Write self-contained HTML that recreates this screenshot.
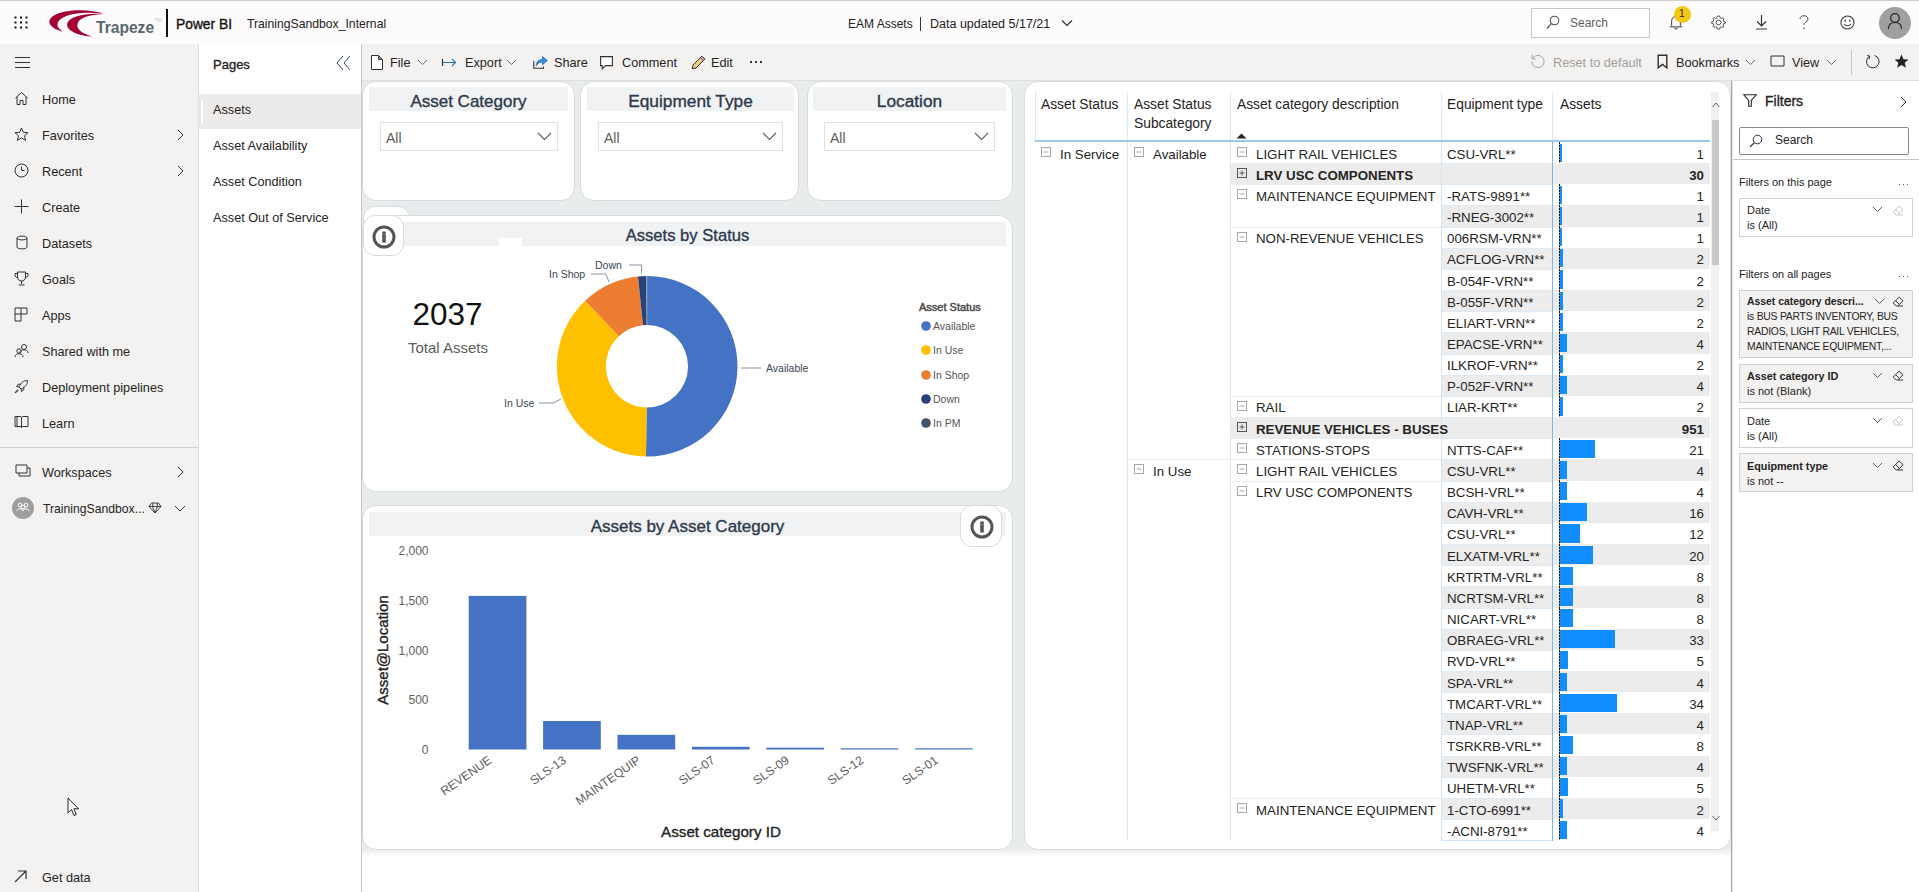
<!DOCTYPE html>
<html><head><meta charset="utf-8">
<style>
*{box-sizing:border-box;margin:0;padding:0}
html,body{width:1919px;height:892px;overflow:hidden;background:#fff}
body{position:relative;font-family:"Liberation Sans",sans-serif;color:#252423}
.a{position:absolute}
.t{position:absolute;white-space:nowrap;line-height:1}
svg{position:absolute;overflow:visible}
/* header */
#hdr{left:0;top:0;width:1919px;height:44px;background:#fdfbfc;border-top:1px solid #cfcfd3}
/* nav */
#nav{left:0;top:44px;width:199px;height:848px;background:#f3f2f1;border-right:1px solid #e1dfdd}
.ni{position:absolute;left:42px;font-size:12.7px;color:#252423;white-space:nowrap;line-height:1}
#pages{left:199px;top:44px;width:163px;height:848px;background:#fff;border-right:1px solid #c8c6c4}
#tb{left:362px;top:44px;width:1557px;height:37px;background:#f3f2f1;border-bottom:1px solid #e1dfdd}
#canvas{left:362px;top:81px;width:1369px;height:769px;background:#e8eced}
#cgrad{left:362px;top:850px;width:1369px;height:7px;background:linear-gradient(#eeeeee,#fff)}
#fp{left:1731px;top:81px;width:188px;height:811px;background:#fff;border-left:1px solid #a8a6a4;box-shadow:inset 1px 0 0 #e4e4e4}
.card{position:absolute;background:#fff;border:1px solid #d6dcdd;border-radius:14px}
.tc{font-size:13.3px;color:#252423}
.tbar{position:absolute;background:#f1f2f4}
.ttl{position:absolute;white-space:nowrap;line-height:1;font-weight:400;-webkit-text-stroke:0.35px #2d3a4b;color:#2d3a4b;text-align:center}
</style></head>
<body>
<div id="hdr" class="a">
<svg style="left:14px;top:15px" width="14" height="13" viewBox="0 0 14 13"><g fill="#111">
<rect x="0.5" y="0.5" width="2" height="2"/><rect x="6" y="0.5" width="2" height="2"/><rect x="11.5" y="0.5" width="2" height="2"/>
<rect x="0.5" y="5.5" width="2" height="2"/><rect x="6" y="5.5" width="2" height="2"/><rect x="11.5" y="5.5" width="2" height="2"/>
<rect x="0.5" y="10.5" width="2" height="2"/><rect x="6" y="10.5" width="2" height="2"/><rect x="11.5" y="10.5" width="2" height="2"/></g></svg>
<svg style="left:45px;top:5px" width="62" height="32" viewBox="0 0 62 32">
<path d="M58.8 7.8 C46 3.5 22 2 9 9.5 C1 14.5 3 21.5 18 25.8 C11 21.5 10 15.5 19 11 C29 6.5 45 6 58.8 7.8 Z" fill="#a50034"/>
<path d="M58.8 7.9 C45 6.8 29 9 23.5 15 C18 22 29 29.5 47.5 30.6 C36 27.5 29.5 22 33.5 15.5 C37.5 10 48 8.5 58.8 7.9 Z" fill="#a50034"/>
</svg>
<div class="t" style="left:96px;top:18.5px;font-size:15.6px;font-weight:700;color:#586670">Trapeze</div>
<div class="t" style="left:155px;top:18px;font-size:4.5px;color:#c0c4c8">TM</div>
<div class="a" style="left:166px;top:8px;width:2px;height:28px;background:#111"></div>
<div class="t" style="left:176px;top:17px;font-size:13.8px;-webkit-text-stroke:0.35px #111;color:#111">Power BI</div>
<div class="t" style="left:247px;top:17px;font-size:12.2px;color:#222">TrainingSandbox_Internal</div>
<div class="t" style="left:848px;top:16.5px;font-size:12px;color:#222">EAM Assets</div><div class="a" style="left:920px;top:16px;width:1px;height:14px;background:#333"></div><div class="t" style="left:930px;top:16.5px;font-size:12.5px;color:#222">Data updated 5/17/21</div>
<svg style="left:1061px;top:18px" width="12" height="8" viewBox="0 0 12 8"><path d="M1 1.5 L6 6.5 L11 1.5" fill="none" stroke="#333" stroke-width="1.2"/></svg>
<div class="a" style="left:1531px;top:7px;width:119px;height:30px;border:1px solid #c8c6c4;background:#fff"></div>
<svg style="left:1546px;top:14px" width="14" height="15" viewBox="0 0 14 15"><circle cx="8.5" cy="5.5" r="4.3" fill="none" stroke="#555" stroke-width="1.1"/><path d="M5.3 8.7 L1 13.5" stroke="#555" stroke-width="1.2"/></svg>
<div class="t" style="left:1570px;top:16px;font-size:12px;color:#605e5c">Search</div>
<svg style="left:1669px;top:14px" width="14" height="15" viewBox="0 0 16 17"><path d="M3 12 L3 7 C3 3.5 5 1.5 8 1.5 C11 1.5 13 3.5 13 7 L13 12 L14.5 13.5 L1.5 13.5 Z" fill="none" stroke="#333" stroke-width="1.1"/><path d="M6 15 C6.5 16.3 9.5 16.3 10 15" fill="none" stroke="#333" stroke-width="1.1"/></svg>
<div class="a" style="left:1674px;top:5px;width:17px;height:17px;border-radius:50%;background:#f2c811"></div>
<div class="t" style="left:1679px;top:8px;font-size:10px;color:#222">1</div>
<svg style="left:1711px;top:14px" width="15" height="15" viewBox="0 0 16 16"><path d="M8 1 L9.3 1.2 L9.8 3 L11.3 3.7 L12.9 2.8 L13.9 3.8 L13 5.4 L13.6 6.9 L15.4 7.4 L15.4 8.7 L13.6 9.2 L13 10.7 L13.9 12.3 L12.9 13.3 L11.3 12.4 L9.8 13.1 L9.3 14.9 L6.7 14.9 L6.2 13.1 L4.7 12.4 L3.1 13.3 L2.1 12.3 L3 10.7 L2.4 9.2 L0.6 8.7 L0.6 7.4 L2.4 6.9 L3 5.4 L2.1 3.8 L3.1 2.8 L4.7 3.7 L6.2 3 L6.7 1.2 Z" fill="none" stroke="#444" stroke-width="1"/><circle cx="8" cy="8" r="2.6" fill="none" stroke="#444" stroke-width="1"/></svg>
<svg style="left:1755px;top:13px" width="13" height="16" viewBox="0 0 13 16"><path d="M6.5 1 L6.5 12 M2 7.5 L6.5 12 L11 7.5 M1 15 L12 15" fill="none" stroke="#333" stroke-width="1.2"/></svg>
<svg style="left:1799px;top:14px" width="10" height="15" viewBox="0 0 11 17"><path d="M1 4.5 C1 2.2 3 0.8 5.5 0.8 C8 0.8 10 2.4 10 4.6 C10 6.8 8.2 7.6 6.8 8.6 C5.8 9.3 5.5 10 5.5 11.5" fill="none" stroke="#444" stroke-width="1.1"/><circle cx="5.5" cy="15" r="0.9" fill="#444"/></svg>
<svg style="left:1840px;top:14px" width="15" height="15" viewBox="0 0 16 16"><circle cx="8" cy="8" r="7" fill="none" stroke="#333" stroke-width="1.1"/><circle cx="5.5" cy="6" r="0.9" fill="#333"/><circle cx="10.5" cy="6" r="0.9" fill="#333"/><path d="M4.5 9.5 C6 12 10 12 11.5 9.5" fill="none" stroke="#333" stroke-width="1.1"/></svg>
<div class="a" style="left:1879px;top:6px;width:32px;height:32px;border-radius:50%;background:#a19f9d"></div>
<svg style="left:1887px;top:11px" width="16" height="18" viewBox="0 0 16 18"><circle cx="8" cy="6" r="4.3" fill="none" stroke="#222" stroke-width="1.2"/><path d="M1.5 17 C1.5 12 4.5 10.5 8 10.5 C11.5 10.5 14.5 12 14.5 17" fill="none" stroke="#222" stroke-width="1.2"/></svg>
</div>
<div id="nav" class="a">
<svg style="left:15px;top:13px" width="15" height="11" viewBox="0 0 15 11"><path d="M0 0.5 H15 M0 5.5 H15 M0 10.5 H15" stroke="#323130" stroke-width="1.1"/></svg>
<svg style="left:14px;top:47px" width="15" height="15" viewBox="0 0 15 15"><path d="M1.5 7 L7.5 1.5 L13.5 7 M3 5.8 V13.5 H6 V9.5 H9 V13.5 H12 V5.8" fill="none" stroke="#323130" stroke-width="1"/></svg>
<div class="ni" style="top:50px">Home</div>
<svg style="left:14px;top:83px" width="15" height="15" viewBox="0 0 15 15"><path d="M7.5 1 L9.4 5.4 L14 5.7 L10.5 8.7 L11.6 13.4 L7.5 10.9 L3.4 13.4 L4.5 8.7 L1 5.7 L5.6 5.4 Z" fill="none" stroke="#323130" stroke-width="1"/></svg>
<div class="ni" style="top:86px">Favorites</div>
<svg style="left:177px;top:85px" width="7" height="12" viewBox="0 0 7 12"><path d="M1 1 L6 6 L1 11" fill="none" stroke="#323130" stroke-width="1"/></svg>
<svg style="left:14px;top:119px" width="15" height="15" viewBox="0 0 15 15"><circle cx="7.5" cy="7.5" r="6.5" fill="none" stroke="#323130" stroke-width="1"/><path d="M7.5 3.5 V7.5 H10.5" fill="none" stroke="#323130" stroke-width="1"/></svg>
<div class="ni" style="top:122px">Recent</div>
<svg style="left:177px;top:121px" width="7" height="12" viewBox="0 0 7 12"><path d="M1 1 L6 6 L1 11" fill="none" stroke="#323130" stroke-width="1"/></svg>
<svg style="left:14px;top:155px" width="15" height="15" viewBox="0 0 15 15"><path d="M7.5 0.5 V14.5 M0.5 7.5 H14.5" fill="none" stroke="#323130" stroke-width="1"/></svg>
<div class="ni" style="top:158px">Create</div>
<svg style="left:16px;top:191px" width="12" height="15" viewBox="0 0 12 15"><path d="M1 3 C1 0.5 11 0.5 11 3 V12 C11 14.5 1 14.5 1 12 Z M1 3 C1 5.5 11 5.5 11 3" fill="none" stroke="#323130" stroke-width="1"/></svg>
<div class="ni" style="top:194px">Datasets</div>
<svg style="left:14px;top:227px" width="15" height="15" viewBox="0 0 15 15"><path d="M3.5 1 H11.5 V6 C11.5 8.5 9.5 10 7.5 10 C5.5 10 3.5 8.5 3.5 6 Z M3.5 2.5 H1 V4 C1 5.5 2 6.5 3.7 6.8 M11.5 2.5 H14 V4 C14 5.5 13 6.5 11.3 6.8 M7.5 10 V13 M4.5 14 H10.5" fill="none" stroke="#323130" stroke-width="1"/></svg>
<div class="ni" style="top:230px">Goals</div>
<svg style="left:14px;top:263px" width="14" height="15" viewBox="0 0 14 15"><path d="M1 1 H13 V7 H7 V14 H1 Z M7 1 V7 M1 7 H7" fill="none" stroke="#323130" stroke-width="1"/></svg>
<div class="ni" style="top:266px">Apps</div>
<svg style="left:14px;top:299px" width="15" height="15" viewBox="0 0 15 15"><circle cx="10" cy="4" r="2.5" fill="none" stroke="#323130" stroke-width="1"/><path d="M6 10 C6 7.5 8 6.8 10 6.8 C12 6.8 14 7.5 14 10" fill="none" stroke="#323130" stroke-width="1"/><circle cx="5" cy="8" r="2.2" fill="none" stroke="#323130" stroke-width="1"/><path d="M1 14 C1 11.5 3 10.8 5 10.8 C7 10.8 9 11.5 9 14" fill="none" stroke="#323130" stroke-width="1"/></svg>
<div class="ni" style="top:302px">Shared with me</div>
<svg style="left:14px;top:335px" width="15" height="15" viewBox="0 0 15 15"><path d="M13.5 1.5 C9.5 1.5 6.5 4 5 8 L7 10 C11 8.5 13.5 5.5 13.5 1.5 Z M5 8 L2.5 7.5 L4.5 5 L7 5.5 M7 10 L7.5 12.5 L10 10.5 L9.5 8 M3.5 10.5 L1 14 L4.5 11.5" fill="none" stroke="#323130" stroke-width="1"/></svg>
<div class="ni" style="top:338px">Deployment pipelines</div>
<svg style="left:14px;top:371px" width="15" height="14" viewBox="0 0 15 14"><path d="M1 1.5 H6 C7 1.5 7.5 2 7.5 3 V13 C7.5 12 7 11.5 6 11.5 H1 Z M14 1.5 H9 C8 1.5 7.5 2 7.5 3 M14 1.5 V11.5 H9 C8 11.5 7.5 12 7.5 13 M3 1.5 V11.5" fill="none" stroke="#323130" stroke-width="1"/></svg>
<div class="ni" style="top:374px">Learn</div>
<div class="a" style="left:0;top:403px;width:198px;height:1px;background:#d2d0ce"></div>
<svg style="left:15px;top:420px" width="16" height="14" viewBox="0 0 16 14"><path d="M1 1 H12 V9 H1 Z M4 9 V12 H15 V4 H12" fill="none" stroke="#323130" stroke-width="1"/></svg>
<div class="ni" style="top:423px">Workspaces</div>
<svg style="left:177px;top:422px" width="7" height="12" viewBox="0 0 7 12"><path d="M1 1 L6 6 L1 11" fill="none" stroke="#323130" stroke-width="1"/></svg>
<div class="a" style="left:12px;top:453px;width:22px;height:22px;border-radius:50%;background:#a19f9d"></div>
<svg style="left:16px;top:458px" width="14" height="11" viewBox="0 0 14 11"><circle cx="4" cy="3" r="1.8" fill="none" stroke="#fff" stroke-width="1"/><circle cx="10" cy="3" r="1.8" fill="none" stroke="#fff" stroke-width="1"/><circle cx="7" cy="5" r="1.8" fill="none" stroke="#fff" stroke-width="1"/><path d="M1 9 C1 6 7 6 7 9 M7 9 C7 6 13 6 13 9" fill="none" stroke="#fff" stroke-width="1"/></svg>
<div class="ni" style="top:459px;left:43px;font-size:12.2px">TrainingSandbox...</div>
<svg style="left:148px;top:458px" width="14" height="12" viewBox="0 0 14 12"><path d="M3.5 1 H10.5 L13 4.5 L7 11 L1 4.5 Z M1 4.5 H13 M5 1 L4.5 4.5 L7 11 L9.5 4.5 L9 1" fill="none" stroke="#323130" stroke-width="0.9"/></svg>
<svg style="left:174px;top:461px" width="12" height="7" viewBox="0 0 12 7"><path d="M1 1 L6 6 L11 1" fill="none" stroke="#323130" stroke-width="1"/></svg>
<svg style="left:14px;top:826px" width="13" height="13" viewBox="0 0 13 13"><path d="M1 12 L12 1 M4 1 H12 V9" fill="none" stroke="#323130" stroke-width="1.2"/></svg>
<div class="ni" style="top:828px">Get data</div>
<svg style="left:67px;top:753px" width="13" height="20" viewBox="0 0 13 20"><path d="M1 1 L1 16 L4.5 12.5 L7 18.5 L9.3 17.5 L6.8 11.8 L11.5 11.8 Z" fill="#fff" stroke="#222" stroke-width="1"/></svg>
</div>
<div id="pages" class="a">
<div class="t" style="left:14px;top:14px;font-size:13px;-webkit-text-stroke:0.35px #252423;color:#252423">Pages</div>
<svg style="left:137px;top:11px" width="15" height="16" viewBox="0 0 15 16"><path d="M7 1 L1 8 L7 15 M14 1 L8 8 L14 15" fill="none" stroke="#3b4a63" stroke-width="1"/></svg>
<div class="a" style="left:0;top:50px;width:162px;height:35px;background:#edebe9"></div>
<div class="a" style="left:2px;top:57px;width:2px;height:22px;background:#fff"></div>
<div class="ni" style="left:14px;top:60px">Assets</div>
<div class="ni" style="left:14px;top:96px">Asset Availability</div>
<div class="ni" style="left:14px;top:132px">Asset Condition</div>
<div class="ni" style="left:14px;top:168px">Asset Out of Service</div>
</div>
<div id="tb" class="a">
<svg style="left:9px;top:11px" width="12" height="15" viewBox="0 0 12 15"><path d="M0.5 0.5 H7.5 L11.5 4.5 V14.5 H0.5 Z" fill="#fff" stroke="#323130" stroke-width="1"/><path d="M7.5 0.5 V4.5 H11.5 Z" fill="#8a8886" stroke="#323130" stroke-width="0.8"/></svg>
<div class="ni" style="left:28px;top:13px">File</div>
<svg style="left:55px;top:15px" width="11" height="7" viewBox="0 0 11 7"><path d="M1 1 L5.5 5.5 L10 1" fill="none" stroke="#605e5c" stroke-width="0.9"/></svg>
<svg style="left:79px;top:14px" width="16" height="9" viewBox="0 0 16 9"><path d="M1.5 1 V8" stroke="#323130" stroke-width="1.2"/><path d="M2 4.5 H14.5 M11 1 L14.5 4.5 L11 8" fill="none" stroke="#1f77b4" stroke-width="1.1"/></svg>
<div class="ni" style="left:103px;top:13px">Export</div>
<svg style="left:144px;top:15px" width="11" height="7" viewBox="0 0 11 7"><path d="M1 1 L5.5 5.5 L10 1" fill="none" stroke="#605e5c" stroke-width="0.9"/></svg>
<svg style="left:171px;top:11px" width="15" height="14" viewBox="0 0 15 14"><path d="M0.8 6 V13.2 H10.5 V11.5" fill="none" stroke="#323130" stroke-width="1.1"/><path d="M3.2 10.8 C3.5 6.5 6 4.5 9.5 4.3 V1.5 L14.3 5.6 L9.5 9.7 V7 C6.8 7 4.8 8.3 3.2 10.8 Z" fill="#3a8ee6" stroke="#1f6fb5" stroke-width="0.8"/></svg>
<div class="ni" style="left:192px;top:13px">Share</div>
<svg style="left:238px;top:12px" width="14" height="14" viewBox="0 0 14 14"><path d="M0.6 0.6 H12.4 V9.6 H5.5 L2.2 13 V9.6 H0.6 Z" fill="#fff" stroke="#323130" stroke-width="1.1"/></svg>
<div class="ni" style="left:260px;top:13px">Comment</div>
<svg style="left:329px;top:11px" width="15" height="15" viewBox="0 0 15 15"><path d="M10.8 1.2 L13.8 4.2 L5 13 L1.2 13.8 L2 10 Z" fill="#f0cf7a" stroke="#323130" stroke-width="1"/><path d="M10.8 1.2 L13.8 4.2 L12.3 5.7 L9.3 2.7 Z" fill="#e4a8d6" stroke="#323130" stroke-width="0.8"/></svg>
<div class="ni" style="left:349px;top:13px">Edit</div>
<div class="a" style="left:388px;top:17px;width:2px;height:2px;background:#323130;box-shadow:5px 0 0 #323130,10px 0 0 #323130"></div>
<svg style="left:1168px;top:10px" width="15" height="15" viewBox="0 0 15 15"><path d="M3 4 C4.5 2 6 1.5 8 1.5 C11.5 1.5 14 4 14 7.5 C14 11 11.5 13.5 8 13.5 C4.5 13.5 2 11 2 7.5" fill="none" stroke="#a19f9d" stroke-width="1"/><path d="M2 1 V5 H6" fill="none" stroke="#a19f9d" stroke-width="1"/></svg>
<div class="ni" style="left:1191px;top:13px;color:#a19f9d">Reset to default</div>
<svg style="left:1295px;top:10px" width="11" height="15" viewBox="0 0 11 15"><path d="M1.2 1.2 H9.8 V13.8 L5.5 10.5 L1.2 13.8 Z" fill="none" stroke="#323130" stroke-width="1.4"/></svg>
<div class="ni" style="left:1314px;top:13px">Bookmarks</div>
<svg style="left:1383px;top:15px" width="11" height="7" viewBox="0 0 11 7"><path d="M1 1 L5.5 5.5 L10 1" fill="none" stroke="#605e5c" stroke-width="0.9"/></svg>
<svg style="left:1408px;top:11px" width="15" height="12" viewBox="0 0 15 12"><path d="M1 1 H14 V11 H1 Z" fill="none" stroke="#323130" stroke-width="1"/></svg>
<div class="ni" style="left:1430px;top:13px">View</div>
<svg style="left:1464px;top:15px" width="11" height="7" viewBox="0 0 11 7"><path d="M1 1 L5.5 5.5 L10 1" fill="none" stroke="#605e5c" stroke-width="0.9"/></svg>
<div class="a" style="left:1489px;top:6px;width:1px;height:25px;background:#c8c6c4"></div>
<svg style="left:1503px;top:10px" width="15" height="15" viewBox="0 0 15 15"><path d="M4.5 2.2 A6.3 6.3 0 1 0 9.5 1.5" fill="none" stroke="#323130" stroke-width="1"/><path d="M2 1.5 L4.8 2.2 L4 5" fill="none" stroke="#323130" stroke-width="1"/></svg>
<svg style="left:1532px;top:10px" width="15" height="15" viewBox="0 0 15 15"><path d="M7.5 0.5 L9.5 5.2 L14.5 5.5 L10.7 8.8 L11.9 13.8 L7.5 11.1 L3.1 13.8 L4.3 8.8 L0.5 5.5 L5.5 5.2 Z" fill="#252423"/></svg>
</div>
<div id="canvas" class="a"></div><div id="cgrad" class="a"></div>
<div class="card" style="left:362px;top:81px;width:213px;height:120px"></div>
<div class="tbar" style="left:369px;top:87px;width:199px;height:24px"></div>
<div class="ttl" style="left:369px;top:93px;width:199px;font-size:17px">Asset Category</div>
<div class="a" style="left:380px;top:122px;width:178px;height:29px;border:1px solid #e1e1e1;background:#fff"></div>
<div class="t" style="left:386px;top:131px;font-size:14px;color:#605e5c">All</div>
<svg style="left:537px;top:132px" width="15" height="9" viewBox="0 0 15 9"><path d="M1 1 L7.5 7.5 L14 1" fill="none" stroke="#605e5c" stroke-width="1.1"/></svg>
<div class="card" style="left:580px;top:81px;width:219px;height:120px"></div>
<div class="tbar" style="left:587px;top:87px;width:207px;height:24px"></div>
<div class="ttl" style="left:587px;top:93px;width:207px;font-size:17.3px">Equipment Type</div>
<div class="a" style="left:598px;top:122px;width:185px;height:29px;border:1px solid #e1e1e1;background:#fff"></div>
<div class="t" style="left:604px;top:131px;font-size:14px;color:#605e5c">All</div>
<svg style="left:762px;top:132px" width="15" height="9" viewBox="0 0 15 9"><path d="M1 1 L7.5 7.5 L14 1" fill="none" stroke="#605e5c" stroke-width="1.1"/></svg>
<div class="card" style="left:807px;top:81px;width:206px;height:120px"></div>
<div class="tbar" style="left:813px;top:87px;width:193px;height:24px"></div>
<div class="ttl" style="left:813px;top:93px;width:193px;font-size:17.3px">Location</div>
<div class="a" style="left:824px;top:122px;width:171px;height:29px;border:1px solid #e1e1e1;background:#fff"></div>
<div class="t" style="left:830px;top:131px;font-size:14px;color:#605e5c">All</div>
<svg style="left:974px;top:132px" width="15" height="9" viewBox="0 0 15 9"><path d="M1 1 L7.5 7.5 L14 1" fill="none" stroke="#605e5c" stroke-width="1.1"/></svg>
<div class="a" style="left:363px;top:206px;width:47px;height:30px;border:1px solid #d6dcdd;border-radius:12px;background:#fff"></div>
<div class="card" style="left:362px;top:215px;width:651px;height:277px"></div>
<div class="tbar" style="left:369px;top:222px;width:637px;height:24px"></div>
<div class="a" style="left:499px;top:238px;width:23px;height:8px;background:#fff"></div>
<div class="ttl" style="left:369px;top:228px;width:637px;font-size:16.6px">Assets by Status</div>
<div class="a" style="left:363px;top:215px;width:41px;height:41px;border:1px solid #d6dcdd;border-radius:12px;background:#fff"></div>
<svg style="left:372px;top:225px" width="24" height="24" viewBox="0 0 24 24"><circle cx="12" cy="12" r="10" fill="none" stroke="#555" stroke-width="3"/><rect x="10.2" y="6.5" width="3.6" height="11" fill="#555"/><rect x="10.2" y="9.3" width="3.6" height="0.6" fill="#999"/></svg>
<svg style="left:362px;top:215px" width="650" height="277" viewBox="0 0 650 277">
<path d="M285.10 61.10 A90.2 90.2 0 1 1 284.00 241.49 L284.60 192.50 A41.2 41.2 0 1 0 285.10 110.10 Z" fill="#4472c4"/>
<path d="M284.00 241.49 A90.2 90.2 0 0 1 223.24 85.65 L256.84 121.32 A41.2 41.2 0 0 0 284.60 192.50 Z" fill="#ffc000"/>
<path d="M223.24 85.65 A90.2 90.2 0 0 1 275.98 61.56 L280.94 110.31 A41.2 41.2 0 0 0 256.84 121.32 Z" fill="#ed7d31"/>
<path d="M275.98 61.56 A90.2 90.2 0 0 1 284.16 61.10 L284.67 110.10 A41.2 41.2 0 0 0 280.94 110.31 Z" fill="#264478"/>
<path d="M284.16 61.10 A90.2 90.2 0 0 1 285.10 61.10 L285.10 110.10 A41.2 41.2 0 0 0 284.67 110.10 Z" fill="#7d8ca3"/>
<g fill="none" stroke="#7b879e" stroke-width="0.9">
<path d="M267 50 H279.5 V58.5"/>
<path d="M229 59 H244 L247 67"/>
<path d="M379 153 H399"/>
<path d="M177 188 H191 L199 184"/>
</g>
<g font-family="Liberation Sans" font-size="10.5" fill="#3b4656">
<text x="233" y="54">Down</text>
<text x="187" y="63">In Shop</text>
<text x="404" y="157">Available</text>
<text x="142" y="192">In Use</text>
</g>
<text x="557" y="96" font-family="Liberation Sans" font-size="11" stroke="#4a4a4a" stroke-width="0.45" fill="#4a4a4a">Asset Status</text>
<g font-family="Liberation Sans" font-size="10.5" fill="#555">
<circle cx="564" cy="111" r="4.8" fill="#4472c4"/><text x="571" y="115">Available</text>
<circle cx="564" cy="135" r="4.8" fill="#ffc000"/><text x="571" y="139">In Use</text>
<circle cx="564" cy="160" r="4.8" fill="#ed7d31"/><text x="571" y="164">In Shop</text>
<circle cx="564" cy="184" r="4.8" fill="#264478"/><text x="571" y="188">Down</text>
<circle cx="564" cy="208" r="4.8" fill="#44546a"/><text x="571" y="212">In PM</text>
</g>
<text x="85.5" y="110" text-anchor="middle" font-family="Liberation Sans" font-size="31.5" fill="#111">2037</text>
<text x="86" y="137.5" text-anchor="middle" font-family="Liberation Sans" font-size="15" fill="#605e5c">Total Assets</text>
</svg>
<div class="card" style="left:362px;top:505px;width:651px;height:345px"></div>
<div class="tbar" style="left:369px;top:512px;width:637px;height:24px"></div>
<div class="ttl" style="left:369px;top:518px;width:637px;font-size:17px">Assets by Asset Category</div>
<div class="a" style="left:960px;top:505px;width:42px;height:42px;border:1px solid #d6dcdd;border-radius:12px;background:#fff"></div>
<svg style="left:970px;top:515px" width="24" height="24" viewBox="0 0 24 24"><circle cx="12" cy="12" r="10" fill="none" stroke="#555" stroke-width="3"/><rect x="10.2" y="6.5" width="3.6" height="11" fill="#555"/><rect x="10.2" y="9.3" width="3.6" height="0.6" fill="#999"/></svg>
<svg style="left:362px;top:505px" width="650" height="345" viewBox="0 0 650 345">
<rect x="106.7" y="90.9" width="57.7" height="153.6" fill="#4472c4"/>
<text x="130.5" y="257.0" text-anchor="end" transform="rotate(-35 130.5 257.0)" font-family="Liberation Sans" font-size="12.2" fill="#605e5c">REVENUE</text>
<rect x="181.1" y="216.0" width="57.7" height="28.5" fill="#4472c4"/>
<text x="205.0" y="257.0" text-anchor="end" transform="rotate(-35 205.0 257.0)" font-family="Liberation Sans" font-size="12.2" fill="#605e5c">SLS-13</text>
<rect x="255.5" y="229.8" width="57.7" height="14.7" fill="#4472c4"/>
<text x="279.4" y="257.0" text-anchor="end" transform="rotate(-35 279.4 257.0)" font-family="Liberation Sans" font-size="12.2" fill="#605e5c">MAINTEQUIP</text>
<rect x="329.9" y="241.8" width="57.7" height="2.7" fill="#4472c4"/>
<text x="353.8" y="257.0" text-anchor="end" transform="rotate(-35 353.8 257.0)" font-family="Liberation Sans" font-size="12.2" fill="#605e5c">SLS-07</text>
<rect x="404.3" y="242.7" width="57.7" height="1.8" fill="#4472c4"/>
<text x="428.1" y="257.0" text-anchor="end" transform="rotate(-35 428.1 257.0)" font-family="Liberation Sans" font-size="12.2" fill="#605e5c">SLS-09</text>
<rect x="478.7" y="243.3" width="57.7" height="1.2" fill="#4472c4"/>
<text x="502.6" y="257.0" text-anchor="end" transform="rotate(-35 502.6 257.0)" font-family="Liberation Sans" font-size="12.2" fill="#605e5c">SLS-12</text>
<rect x="553.1" y="243.3" width="57.7" height="1.2" fill="#4472c4"/>
<text x="577.0" y="257.0" text-anchor="end" transform="rotate(-35 577.0 257.0)" font-family="Liberation Sans" font-size="12.2" fill="#605e5c">SLS-01</text>
<text x="66.5" y="50.4" text-anchor="end" font-family="Liberation Sans" font-size="12" fill="#605e5c">2,000</text>
<text x="66.5" y="99.8" text-anchor="end" font-family="Liberation Sans" font-size="12" fill="#605e5c">1,500</text>
<text x="66.5" y="149.6" text-anchor="end" font-family="Liberation Sans" font-size="12" fill="#605e5c">1,000</text>
<text x="66.5" y="198.5" text-anchor="end" font-family="Liberation Sans" font-size="12" fill="#605e5c">500</text>
<text x="66.5" y="248.7" text-anchor="end" font-family="Liberation Sans" font-size="12" fill="#605e5c">0</text>

<text x="0" y="0" transform="translate(26 145) rotate(-90)" text-anchor="middle" font-family="Liberation Sans" font-size="15" stroke="#252423" stroke-width="0.35" fill="#252423">Asset@Location</text>
<text x="359" y="332" text-anchor="middle" font-family="Liberation Sans" font-size="15.2" stroke="#252423" stroke-width="0.35" fill="#252423">Asset category ID</text>
</svg>

<div class="card" style="left:1024px;top:81px;width:707px;height:769px"></div>
<div class="t tc" style="left:1041px;top:98.0px;font-size:13.8px">Asset Status</div>
<div class="t tc" style="left:1134px;top:98.0px;font-size:13.8px">Asset Status</div>
<div class="t tc" style="left:1134px;top:117.0px;font-size:13.8px">Subcategory</div>
<div class="t tc" style="left:1237px;top:98.0px;font-size:13.8px">Asset category description</div>
<div class="t tc" style="left:1447px;top:98.0px;font-size:13.8px">Equipment type</div>
<div class="t tc" style="left:1560px;top:98.0px;font-size:13.8px">Assets</div>
<svg style="left:1236px;top:133px" width="11" height="6" viewBox="0 0 11 6"><path d="M0.5 5.5 L5.5 0.5 L10.5 5.5 Z" fill="#252423"/></svg>
<div class="a" style="left:1035px;top:92px;width:1px;height:49px;background:#d3e6f8"></div>
<div class="a" style="left:1127px;top:92px;width:1px;height:49px;background:#dce9f6"></div>
<div class="a" style="left:1230px;top:92px;width:1px;height:49px;background:#dce9f6"></div>
<div class="a" style="left:1441px;top:92px;width:1px;height:49px;background:#dce9f6"></div>
<div class="a" style="left:1552px;top:92px;width:1px;height:49px;background:#dce9f6"></div>
<div class="a" style="left:1231px;top:163.16px;width:479px;height:21.16px;background:#ececec"></div>
<div class="a" style="left:1442px;top:205.48px;width:268px;height:21.16px;background:#ececec"></div>
<div class="a" style="left:1442px;top:247.80px;width:268px;height:21.16px;background:#ececec"></div>
<div class="a" style="left:1442px;top:290.12px;width:268px;height:21.16px;background:#ececec"></div>
<div class="a" style="left:1442px;top:332.44px;width:268px;height:21.16px;background:#ececec"></div>
<div class="a" style="left:1442px;top:374.76px;width:268px;height:21.16px;background:#ececec"></div>
<div class="a" style="left:1231px;top:417.08px;width:479px;height:21.16px;background:#ececec"></div>
<div class="a" style="left:1442px;top:459.40px;width:268px;height:21.16px;background:#ececec"></div>
<div class="a" style="left:1442px;top:501.72px;width:268px;height:21.16px;background:#ececec"></div>
<div class="a" style="left:1442px;top:544.04px;width:268px;height:21.16px;background:#ececec"></div>
<div class="a" style="left:1442px;top:586.36px;width:268px;height:21.16px;background:#ececec"></div>
<div class="a" style="left:1442px;top:628.68px;width:268px;height:21.16px;background:#ececec"></div>
<div class="a" style="left:1442px;top:671.00px;width:268px;height:21.16px;background:#ececec"></div>
<div class="a" style="left:1442px;top:713.32px;width:268px;height:21.16px;background:#ececec"></div>
<div class="a" style="left:1442px;top:755.64px;width:268px;height:21.16px;background:#ececec"></div>
<div class="a" style="left:1442px;top:797.96px;width:268px;height:21.16px;background:#ececec"></div>
<div class="a" style="left:1231px;top:163.16px;width:210px;height:1px;background:#e9eef4"></div>
<div class="a" style="left:1231px;top:184.32px;width:210px;height:1px;background:#e9eef4"></div>
<div class="a" style="left:1231px;top:226.64px;width:210px;height:1px;background:#e9eef4"></div>
<div class="a" style="left:1231px;top:395.92px;width:210px;height:1px;background:#e9eef4"></div>
<div class="a" style="left:1231px;top:417.08px;width:210px;height:1px;background:#e9eef4"></div>
<div class="a" style="left:1231px;top:438.24px;width:210px;height:1px;background:#e9eef4"></div>
<div class="a" style="left:1231px;top:459.40px;width:210px;height:1px;background:#e9eef4"></div>
<div class="a" style="left:1231px;top:480.56px;width:210px;height:1px;background:#e9eef4"></div>
<div class="a" style="left:1231px;top:797.96px;width:210px;height:1px;background:#e9eef4"></div>
<div class="a" style="left:1442px;top:163.16px;width:110px;height:1px;background:#dde9f5"></div>
<div class="a" style="left:1442px;top:184.32px;width:110px;height:1px;background:#dde9f5"></div>
<div class="a" style="left:1442px;top:205.48px;width:110px;height:1px;background:#dde9f5"></div>
<div class="a" style="left:1442px;top:226.64px;width:110px;height:1px;background:#dde9f5"></div>
<div class="a" style="left:1442px;top:247.80px;width:110px;height:1px;background:#dde9f5"></div>
<div class="a" style="left:1442px;top:268.96px;width:110px;height:1px;background:#dde9f5"></div>
<div class="a" style="left:1442px;top:290.12px;width:110px;height:1px;background:#dde9f5"></div>
<div class="a" style="left:1442px;top:311.28px;width:110px;height:1px;background:#dde9f5"></div>
<div class="a" style="left:1442px;top:332.44px;width:110px;height:1px;background:#dde9f5"></div>
<div class="a" style="left:1442px;top:353.60px;width:110px;height:1px;background:#dde9f5"></div>
<div class="a" style="left:1442px;top:374.76px;width:110px;height:1px;background:#dde9f5"></div>
<div class="a" style="left:1442px;top:395.92px;width:110px;height:1px;background:#dde9f5"></div>
<div class="a" style="left:1442px;top:417.08px;width:110px;height:1px;background:#dde9f5"></div>
<div class="a" style="left:1442px;top:438.24px;width:110px;height:1px;background:#dde9f5"></div>
<div class="a" style="left:1442px;top:459.40px;width:110px;height:1px;background:#dde9f5"></div>
<div class="a" style="left:1442px;top:480.56px;width:110px;height:1px;background:#dde9f5"></div>
<div class="a" style="left:1442px;top:501.72px;width:110px;height:1px;background:#dde9f5"></div>
<div class="a" style="left:1442px;top:522.88px;width:110px;height:1px;background:#dde9f5"></div>
<div class="a" style="left:1442px;top:544.04px;width:110px;height:1px;background:#dde9f5"></div>
<div class="a" style="left:1442px;top:565.20px;width:110px;height:1px;background:#dde9f5"></div>
<div class="a" style="left:1442px;top:586.36px;width:110px;height:1px;background:#dde9f5"></div>
<div class="a" style="left:1442px;top:607.52px;width:110px;height:1px;background:#dde9f5"></div>
<div class="a" style="left:1442px;top:628.68px;width:110px;height:1px;background:#dde9f5"></div>
<div class="a" style="left:1442px;top:649.84px;width:110px;height:1px;background:#dde9f5"></div>
<div class="a" style="left:1442px;top:671.00px;width:110px;height:1px;background:#dde9f5"></div>
<div class="a" style="left:1442px;top:692.16px;width:110px;height:1px;background:#dde9f5"></div>
<div class="a" style="left:1442px;top:713.32px;width:110px;height:1px;background:#dde9f5"></div>
<div class="a" style="left:1442px;top:734.48px;width:110px;height:1px;background:#dde9f5"></div>
<div class="a" style="left:1442px;top:755.64px;width:110px;height:1px;background:#dde9f5"></div>
<div class="a" style="left:1442px;top:776.80px;width:110px;height:1px;background:#dde9f5"></div>
<div class="a" style="left:1442px;top:797.96px;width:110px;height:1px;background:#dde9f5"></div>
<div class="a" style="left:1442px;top:819.12px;width:110px;height:1px;background:#dde9f5"></div>
<div class="a" style="left:1128px;top:459.40px;width:102px;height:1px;background:#e9eef4"></div>
<div class="a" style="left:1127px;top:142px;width:1px;height:699px;background:#e6e6e6"></div>
<div class="a" style="left:1230px;top:142px;width:1px;height:699px;background:#e6e6e6"></div>
<div class="a" style="left:1441px;top:142px;width:1px;height:699px;background:#d3e4f5"></div>
<div class="a" style="left:1552px;top:142px;width:1px;height:699px;background:#7fb5ea"></div>
<div class="a" style="left:1442px;top:840px;width:110px;height:1px;background:#d3e4f5"></div>
<div class="a" style="left:1035px;top:140px;width:675px;height:2px;background:#9ccaf4"></div>
<svg style="left:1041px;top:147px" width="10" height="10" viewBox="0 0 10 10"><rect x="0.5" y="0.5" width="9" height="9" fill="none" stroke="#a8a8a8" stroke-width="1"/><path d="M2.5 5 H7.5" stroke="#a8a8a8" stroke-width="1"/></svg>
<div class="t tc" style="left:1060px;top:147.5px">In Service</div>
<svg style="left:1134px;top:147px" width="10" height="10" viewBox="0 0 10 10"><rect x="0.5" y="0.5" width="9" height="9" fill="none" stroke="#a8a8a8" stroke-width="1"/><path d="M2.5 5 H7.5" stroke="#a8a8a8" stroke-width="1"/></svg>
<div class="t tc" style="left:1153px;top:147.5px">Available</div>
<svg style="left:1237px;top:147px" width="10" height="10" viewBox="0 0 10 10"><rect x="0.5" y="0.5" width="9" height="9" fill="none" stroke="#a8a8a8" stroke-width="1"/><path d="M2.5 5 H7.5" stroke="#a8a8a8" stroke-width="1"/></svg>
<div class="t tc" style="left:1256px;top:147.5px">LIGHT RAIL VEHICLES</div>
<div class="t tc" style="left:1447px;top:147.5px">CSU-VRL**</div>
<div class="a" style="left:1559px;top:142.00px;width:1px;height:21.16px;background:repeating-linear-gradient(#111 0 2px,#8ab 2px 3px)"></div>
<div class="a" style="left:1560px;top:143.50px;width:1.7px;height:18.16px;background:#118dff"></div>
<div class="t tc" style="left:1604px;width:100px;text-align:right;top:147.5px;">1</div>
<svg style="left:1237px;top:168px" width="10" height="10" viewBox="0 0 10 10"><rect x="0.5" y="0.5" width="9" height="9" fill="none" stroke="#555" stroke-width="1"/><path d="M2.5 5 H7.5 M5 2.5 V7.5" stroke="#555" stroke-width="1"/></svg>
<div class="t tc" style="left:1256px;top:168.7px;font-weight:700">LRV USC COMPONENTS</div>
<div class="t tc" style="left:1604px;width:100px;text-align:right;top:168.7px;font-weight:700">30</div>
<svg style="left:1237px;top:189px" width="10" height="10" viewBox="0 0 10 10"><rect x="0.5" y="0.5" width="9" height="9" fill="none" stroke="#a8a8a8" stroke-width="1"/><path d="M2.5 5 H7.5" stroke="#a8a8a8" stroke-width="1"/></svg>
<div class="t tc" style="left:1256px;top:189.8px">MAINTENANCE EQUIPMENT</div>
<div class="t tc" style="left:1447px;top:189.8px">-RATS-9891**</div>
<div class="a" style="left:1559px;top:184.32px;width:1px;height:21.16px;background:repeating-linear-gradient(#111 0 2px,#8ab 2px 3px)"></div>
<div class="a" style="left:1560px;top:185.82px;width:1.7px;height:18.16px;background:#118dff"></div>
<div class="t tc" style="left:1604px;width:100px;text-align:right;top:189.8px;">1</div>
<div class="t tc" style="left:1447px;top:211.0px">-RNEG-3002**</div>
<div class="a" style="left:1559px;top:205.48px;width:1px;height:21.16px;background:repeating-linear-gradient(#111 0 2px,#8ab 2px 3px)"></div>
<div class="a" style="left:1560px;top:206.98px;width:1.7px;height:18.16px;background:#118dff"></div>
<div class="t tc" style="left:1604px;width:100px;text-align:right;top:211.0px;">1</div>
<svg style="left:1237px;top:232px" width="10" height="10" viewBox="0 0 10 10"><rect x="0.5" y="0.5" width="9" height="9" fill="none" stroke="#a8a8a8" stroke-width="1"/><path d="M2.5 5 H7.5" stroke="#a8a8a8" stroke-width="1"/></svg>
<div class="t tc" style="left:1256px;top:232.1px">NON-REVENUE VEHICLES</div>
<div class="t tc" style="left:1447px;top:232.1px">006RSM-VRN**</div>
<div class="a" style="left:1559px;top:226.64px;width:1px;height:21.16px;background:repeating-linear-gradient(#111 0 2px,#8ab 2px 3px)"></div>
<div class="a" style="left:1560px;top:228.14px;width:1.7px;height:18.16px;background:#118dff"></div>
<div class="t tc" style="left:1604px;width:100px;text-align:right;top:232.1px;">1</div>
<div class="t tc" style="left:1447px;top:253.3px">ACFLOG-VRN**</div>
<div class="a" style="left:1559px;top:247.80px;width:1px;height:21.16px;background:repeating-linear-gradient(#111 0 2px,#8ab 2px 3px)"></div>
<div class="a" style="left:1560px;top:249.30px;width:3.3px;height:18.16px;background:#118dff"></div>
<div class="t tc" style="left:1604px;width:100px;text-align:right;top:253.3px;">2</div>
<div class="t tc" style="left:1447px;top:274.5px">B-054F-VRN**</div>
<div class="a" style="left:1559px;top:268.96px;width:1px;height:21.16px;background:repeating-linear-gradient(#111 0 2px,#8ab 2px 3px)"></div>
<div class="a" style="left:1560px;top:270.46px;width:3.3px;height:18.16px;background:#118dff"></div>
<div class="t tc" style="left:1604px;width:100px;text-align:right;top:274.5px;">2</div>
<div class="t tc" style="left:1447px;top:295.6px">B-055F-VRN**</div>
<div class="a" style="left:1559px;top:290.12px;width:1px;height:21.16px;background:repeating-linear-gradient(#111 0 2px,#8ab 2px 3px)"></div>
<div class="a" style="left:1560px;top:291.62px;width:3.3px;height:18.16px;background:#118dff"></div>
<div class="t tc" style="left:1604px;width:100px;text-align:right;top:295.6px;">2</div>
<div class="t tc" style="left:1447px;top:316.8px">ELIART-VRN**</div>
<div class="a" style="left:1559px;top:311.28px;width:1px;height:21.16px;background:repeating-linear-gradient(#111 0 2px,#8ab 2px 3px)"></div>
<div class="a" style="left:1560px;top:312.78px;width:3.3px;height:18.16px;background:#118dff"></div>
<div class="t tc" style="left:1604px;width:100px;text-align:right;top:316.8px;">2</div>
<div class="t tc" style="left:1447px;top:337.9px">EPACSE-VRN**</div>
<div class="a" style="left:1559px;top:332.44px;width:1px;height:21.16px;background:repeating-linear-gradient(#111 0 2px,#8ab 2px 3px)"></div>
<div class="a" style="left:1560px;top:333.94px;width:6.7px;height:18.16px;background:#118dff"></div>
<div class="t tc" style="left:1604px;width:100px;text-align:right;top:337.9px;">4</div>
<div class="t tc" style="left:1447px;top:359.1px">ILKROF-VRN**</div>
<div class="a" style="left:1559px;top:353.60px;width:1px;height:21.16px;background:repeating-linear-gradient(#111 0 2px,#8ab 2px 3px)"></div>
<div class="a" style="left:1560px;top:355.10px;width:3.3px;height:18.16px;background:#118dff"></div>
<div class="t tc" style="left:1604px;width:100px;text-align:right;top:359.1px;">2</div>
<div class="t tc" style="left:1447px;top:380.3px">P-052F-VRN**</div>
<div class="a" style="left:1559px;top:374.76px;width:1px;height:21.16px;background:repeating-linear-gradient(#111 0 2px,#8ab 2px 3px)"></div>
<div class="a" style="left:1560px;top:376.26px;width:6.7px;height:18.16px;background:#118dff"></div>
<div class="t tc" style="left:1604px;width:100px;text-align:right;top:380.3px;">4</div>
<svg style="left:1237px;top:401px" width="10" height="10" viewBox="0 0 10 10"><rect x="0.5" y="0.5" width="9" height="9" fill="none" stroke="#a8a8a8" stroke-width="1"/><path d="M2.5 5 H7.5" stroke="#a8a8a8" stroke-width="1"/></svg>
<div class="t tc" style="left:1256px;top:401.4px">RAIL</div>
<div class="t tc" style="left:1447px;top:401.4px">LIAR-KRT**</div>
<div class="a" style="left:1559px;top:395.92px;width:1px;height:21.16px;background:repeating-linear-gradient(#111 0 2px,#8ab 2px 3px)"></div>
<div class="a" style="left:1560px;top:397.42px;width:3.3px;height:18.16px;background:#118dff"></div>
<div class="t tc" style="left:1604px;width:100px;text-align:right;top:401.4px;">2</div>
<svg style="left:1237px;top:422px" width="10" height="10" viewBox="0 0 10 10"><rect x="0.5" y="0.5" width="9" height="9" fill="none" stroke="#555" stroke-width="1"/><path d="M2.5 5 H7.5 M5 2.5 V7.5" stroke="#555" stroke-width="1"/></svg>
<div class="t tc" style="left:1256px;top:422.6px;font-weight:700">REVENUE VEHICLES - BUSES</div>
<div class="t tc" style="left:1604px;width:100px;text-align:right;top:422.6px;font-weight:700">951</div>
<svg style="left:1237px;top:443px" width="10" height="10" viewBox="0 0 10 10"><rect x="0.5" y="0.5" width="9" height="9" fill="none" stroke="#a8a8a8" stroke-width="1"/><path d="M2.5 5 H7.5" stroke="#a8a8a8" stroke-width="1"/></svg>
<div class="t tc" style="left:1256px;top:443.7px">STATIONS-STOPS</div>
<div class="t tc" style="left:1447px;top:443.7px">NTTS-CAF**</div>
<div class="a" style="left:1559px;top:438.24px;width:1px;height:21.16px;background:repeating-linear-gradient(#111 0 2px,#8ab 2px 3px)"></div>
<div class="a" style="left:1560px;top:439.74px;width:35.1px;height:18.16px;background:#118dff"></div>
<div class="t tc" style="left:1604px;width:100px;text-align:right;top:443.7px;">21</div>
<svg style="left:1134px;top:464px" width="10" height="10" viewBox="0 0 10 10"><rect x="0.5" y="0.5" width="9" height="9" fill="none" stroke="#a8a8a8" stroke-width="1"/><path d="M2.5 5 H7.5" stroke="#a8a8a8" stroke-width="1"/></svg>
<div class="t tc" style="left:1153px;top:464.9px">In Use</div>
<svg style="left:1237px;top:464px" width="10" height="10" viewBox="0 0 10 10"><rect x="0.5" y="0.5" width="9" height="9" fill="none" stroke="#a8a8a8" stroke-width="1"/><path d="M2.5 5 H7.5" stroke="#a8a8a8" stroke-width="1"/></svg>
<div class="t tc" style="left:1256px;top:464.9px">LIGHT RAIL VEHICLES</div>
<div class="t tc" style="left:1447px;top:464.9px">CSU-VRL**</div>
<div class="a" style="left:1559px;top:459.40px;width:1px;height:21.16px;background:repeating-linear-gradient(#111 0 2px,#8ab 2px 3px)"></div>
<div class="a" style="left:1560px;top:460.90px;width:6.7px;height:18.16px;background:#118dff"></div>
<div class="t tc" style="left:1604px;width:100px;text-align:right;top:464.9px;">4</div>
<svg style="left:1237px;top:486px" width="10" height="10" viewBox="0 0 10 10"><rect x="0.5" y="0.5" width="9" height="9" fill="none" stroke="#a8a8a8" stroke-width="1"/><path d="M2.5 5 H7.5" stroke="#a8a8a8" stroke-width="1"/></svg>
<div class="t tc" style="left:1256px;top:486.1px">LRV USC COMPONENTS</div>
<div class="t tc" style="left:1447px;top:486.1px">BCSH-VRL**</div>
<div class="a" style="left:1559px;top:480.56px;width:1px;height:21.16px;background:repeating-linear-gradient(#111 0 2px,#8ab 2px 3px)"></div>
<div class="a" style="left:1560px;top:482.06px;width:6.7px;height:18.16px;background:#118dff"></div>
<div class="t tc" style="left:1604px;width:100px;text-align:right;top:486.1px;">4</div>
<div class="t tc" style="left:1447px;top:507.2px">CAVH-VRL**</div>
<div class="a" style="left:1559px;top:501.72px;width:1px;height:21.16px;background:repeating-linear-gradient(#111 0 2px,#8ab 2px 3px)"></div>
<div class="a" style="left:1560px;top:503.22px;width:26.7px;height:18.16px;background:#118dff"></div>
<div class="t tc" style="left:1604px;width:100px;text-align:right;top:507.2px;">16</div>
<div class="t tc" style="left:1447px;top:528.4px">CSU-VRL**</div>
<div class="a" style="left:1559px;top:522.88px;width:1px;height:21.16px;background:repeating-linear-gradient(#111 0 2px,#8ab 2px 3px)"></div>
<div class="a" style="left:1560px;top:524.38px;width:20.0px;height:18.16px;background:#118dff"></div>
<div class="t tc" style="left:1604px;width:100px;text-align:right;top:528.4px;">12</div>
<div class="t tc" style="left:1447px;top:549.5px">ELXATM-VRL**</div>
<div class="a" style="left:1559px;top:544.04px;width:1px;height:21.16px;background:repeating-linear-gradient(#111 0 2px,#8ab 2px 3px)"></div>
<div class="a" style="left:1560px;top:545.54px;width:33.4px;height:18.16px;background:#118dff"></div>
<div class="t tc" style="left:1604px;width:100px;text-align:right;top:549.5px;">20</div>
<div class="t tc" style="left:1447px;top:570.7px">KRTRTM-VRL**</div>
<div class="a" style="left:1559px;top:565.20px;width:1px;height:21.16px;background:repeating-linear-gradient(#111 0 2px,#8ab 2px 3px)"></div>
<div class="a" style="left:1560px;top:566.70px;width:13.4px;height:18.16px;background:#118dff"></div>
<div class="t tc" style="left:1604px;width:100px;text-align:right;top:570.7px;">8</div>
<div class="t tc" style="left:1447px;top:591.9px">NCRTSM-VRL**</div>
<div class="a" style="left:1559px;top:586.36px;width:1px;height:21.16px;background:repeating-linear-gradient(#111 0 2px,#8ab 2px 3px)"></div>
<div class="a" style="left:1560px;top:587.86px;width:13.4px;height:18.16px;background:#118dff"></div>
<div class="t tc" style="left:1604px;width:100px;text-align:right;top:591.9px;">8</div>
<div class="t tc" style="left:1447px;top:613.0px">NICART-VRL**</div>
<div class="a" style="left:1559px;top:607.52px;width:1px;height:21.16px;background:repeating-linear-gradient(#111 0 2px,#8ab 2px 3px)"></div>
<div class="a" style="left:1560px;top:609.02px;width:13.4px;height:18.16px;background:#118dff"></div>
<div class="t tc" style="left:1604px;width:100px;text-align:right;top:613.0px;">8</div>
<div class="t tc" style="left:1447px;top:634.2px">OBRAEG-VRL**</div>
<div class="a" style="left:1559px;top:628.68px;width:1px;height:21.16px;background:repeating-linear-gradient(#111 0 2px,#8ab 2px 3px)"></div>
<div class="a" style="left:1560px;top:630.18px;width:55.1px;height:18.16px;background:#118dff"></div>
<div class="t tc" style="left:1604px;width:100px;text-align:right;top:634.2px;">33</div>
<div class="t tc" style="left:1447px;top:655.3px">RVD-VRL**</div>
<div class="a" style="left:1559px;top:649.84px;width:1px;height:21.16px;background:repeating-linear-gradient(#111 0 2px,#8ab 2px 3px)"></div>
<div class="a" style="left:1560px;top:651.34px;width:8.3px;height:18.16px;background:#118dff"></div>
<div class="t tc" style="left:1604px;width:100px;text-align:right;top:655.3px;">5</div>
<div class="t tc" style="left:1447px;top:676.5px">SPA-VRL**</div>
<div class="a" style="left:1559px;top:671.00px;width:1px;height:21.16px;background:repeating-linear-gradient(#111 0 2px,#8ab 2px 3px)"></div>
<div class="a" style="left:1560px;top:672.50px;width:6.7px;height:18.16px;background:#118dff"></div>
<div class="t tc" style="left:1604px;width:100px;text-align:right;top:676.5px;">4</div>
<div class="t tc" style="left:1447px;top:697.7px">TMCART-VRL**</div>
<div class="a" style="left:1559px;top:692.16px;width:1px;height:21.16px;background:repeating-linear-gradient(#111 0 2px,#8ab 2px 3px)"></div>
<div class="a" style="left:1560px;top:693.66px;width:56.8px;height:18.16px;background:#118dff"></div>
<div class="t tc" style="left:1604px;width:100px;text-align:right;top:697.7px;">34</div>
<div class="t tc" style="left:1447px;top:718.8px">TNAP-VRL**</div>
<div class="a" style="left:1559px;top:713.32px;width:1px;height:21.16px;background:repeating-linear-gradient(#111 0 2px,#8ab 2px 3px)"></div>
<div class="a" style="left:1560px;top:714.82px;width:6.7px;height:18.16px;background:#118dff"></div>
<div class="t tc" style="left:1604px;width:100px;text-align:right;top:718.8px;">4</div>
<div class="t tc" style="left:1447px;top:740.0px">TSRKRB-VRL**</div>
<div class="a" style="left:1559px;top:734.48px;width:1px;height:21.16px;background:repeating-linear-gradient(#111 0 2px,#8ab 2px 3px)"></div>
<div class="a" style="left:1560px;top:735.98px;width:13.4px;height:18.16px;background:#118dff"></div>
<div class="t tc" style="left:1604px;width:100px;text-align:right;top:740.0px;">8</div>
<div class="t tc" style="left:1447px;top:761.1px">TWSFNK-VRL**</div>
<div class="a" style="left:1559px;top:755.64px;width:1px;height:21.16px;background:repeating-linear-gradient(#111 0 2px,#8ab 2px 3px)"></div>
<div class="a" style="left:1560px;top:757.14px;width:6.7px;height:18.16px;background:#118dff"></div>
<div class="t tc" style="left:1604px;width:100px;text-align:right;top:761.1px;">4</div>
<div class="t tc" style="left:1447px;top:782.3px">UHETM-VRL**</div>
<div class="a" style="left:1559px;top:776.80px;width:1px;height:21.16px;background:repeating-linear-gradient(#111 0 2px,#8ab 2px 3px)"></div>
<div class="a" style="left:1560px;top:778.30px;width:8.3px;height:18.16px;background:#118dff"></div>
<div class="t tc" style="left:1604px;width:100px;text-align:right;top:782.3px;">5</div>
<svg style="left:1237px;top:803px" width="10" height="10" viewBox="0 0 10 10"><rect x="0.5" y="0.5" width="9" height="9" fill="none" stroke="#a8a8a8" stroke-width="1"/><path d="M2.5 5 H7.5" stroke="#a8a8a8" stroke-width="1"/></svg>
<div class="t tc" style="left:1256px;top:803.5px">MAINTENANCE EQUIPMENT</div>
<div class="t tc" style="left:1447px;top:803.5px">1-CTO-6991**</div>
<div class="a" style="left:1559px;top:797.96px;width:1px;height:21.16px;background:repeating-linear-gradient(#111 0 2px,#8ab 2px 3px)"></div>
<div class="a" style="left:1560px;top:799.46px;width:3.3px;height:18.16px;background:#118dff"></div>
<div class="t tc" style="left:1604px;width:100px;text-align:right;top:803.5px;">2</div>
<div class="t tc" style="left:1447px;top:824.6px">-ACNI-8791**</div>
<div class="a" style="left:1559px;top:819.12px;width:1px;height:21.16px;background:repeating-linear-gradient(#111 0 2px,#8ab 2px 3px)"></div>
<div class="a" style="left:1560px;top:820.62px;width:6.7px;height:18.16px;background:#118dff"></div>
<div class="t tc" style="left:1604px;width:100px;text-align:right;top:824.6px;">4</div>
<div class="a" style="left:1711px;top:92px;width:8px;height:739px;background:#f0f0f0"></div>
<div class="a" style="left:1712px;top:120px;width:7px;height:145px;background:#c8c8c8"></div>
<svg style="left:1712px;top:102px" width="8" height="6" viewBox="0 0 8 6"><path d="M0.5 5 L4 1 L7.5 5" fill="none" stroke="#666" stroke-width="1"/></svg>
<svg style="left:1712px;top:815px" width="8" height="6" viewBox="0 0 8 6"><path d="M0.5 1 L4 5 L7.5 1" fill="none" stroke="#666" stroke-width="1"/></svg>
<div id="fp" class="a"></div>
<svg style="left:1743px;top:94px" width="14" height="13" viewBox="0 0 14 13"><path d="M0.8 0.8 H13.2 L8.3 6.5 V12.2 H5.7 V6.5 Z" fill="none" stroke="#252423" stroke-width="1.1"/></svg>
<div class="t" style="left:1765px;top:94px;font-size:14px;-webkit-text-stroke:0.35px #252423;color:#252423">Filters</div>
<svg style="left:1900px;top:96px" width="7" height="12" viewBox="0 0 7 12"><path d="M1 1 L6 6 L1 11" fill="none" stroke="#323130" stroke-width="1"/></svg>
<div class="a" style="left:1739px;top:127px;width:170px;height:28px;border:1px solid #8a8886;border-radius:2px;background:#fff"></div>
<svg style="left:1749px;top:134px" width="14" height="14" viewBox="0 0 14 14"><circle cx="8.5" cy="5.5" r="4.3" fill="none" stroke="#323130" stroke-width="1"/><path d="M5.5 8.5 L1 13" stroke="#323130" stroke-width="1.1"/></svg>
<div class="t" style="left:1775px;top:134px;font-size:12px;color:#252423">Search</div>
<div class="a" style="left:1733px;top:159px;width:186px;height:1px;background:#c8c6c4"></div>
<div class="t" style="left:1739px;top:177px;font-size:11px;color:#252423">Filters on this page</div>
<div class="a" style="left:1899px;top:184px;width:1px;height:1px;background:#605e5c;box-shadow:4px 0 0 #605e5c,8px 0 0 #605e5c"></div>
<div class="a" style="left:1739px;top:198px;width:174px;height:39px;border:1px solid #d2d0ce;background:#fff"></div>
<div class="t" style="left:1747px;top:205px;font-size:11px;color:#252423">Date</div>
<div class="t" style="left:1747px;top:220px;font-size:11px;color:#252423">is (All)</div>
<svg style="left:1872px;top:206px" width="11" height="7" viewBox="0 0 11 7"><path d="M1 1 L5.5 5.5 L10 1" fill="none" stroke="#605e5c" stroke-width="1"/></svg><svg style="left:1892px;top:205px" width="12" height="11" viewBox="0 0 12 11"><path d="M4.2 10 L1.2 7 L7.2 1 L11 4.8 L5.8 10 Z M3.6 4.6 L7.4 8.4 M5.8 10 H11" fill="none" stroke="#c8c6c4" stroke-width="1"/></svg>
<div class="t" style="left:1739px;top:269px;font-size:11px;color:#252423">Filters on all pages</div>
<div class="a" style="left:1899px;top:276px;width:1px;height:1px;background:#605e5c;box-shadow:4px 0 0 #605e5c,8px 0 0 #605e5c"></div>
<div class="a" style="left:1739px;top:290px;width:174px;height:68px;border:1px solid #d2d0ce;background:#f3f2f1"></div>
<div class="t" style="left:1747px;top:297px;font-size:10.4px;font-weight:700;color:#252423">Asset category descri...</div>
<div class="t" style="left:1747px;top:312px;font-size:10.4px;letter-spacing:-0.25px;color:#252423">is BUS PARTS INVENTORY, BUS</div>
<div class="t" style="left:1747px;top:327px;font-size:10.4px;letter-spacing:-0.25px;color:#252423">RADIOS, LIGHT RAIL VEHICLES,</div>
<div class="t" style="left:1747px;top:342px;font-size:10.4px;letter-spacing:-0.25px;color:#252423">MAINTENANCE EQUIPMENT,...</div>
<svg style="left:1874px;top:298px" width="11" height="7" viewBox="0 0 11 7"><path d="M1 1 L5.5 5.5 L10 1" fill="none" stroke="#605e5c" stroke-width="1"/></svg><svg style="left:1892px;top:296px" width="12" height="11" viewBox="0 0 12 11"><path d="M4.2 10 L1.2 7 L7.2 1 L11 4.8 L5.8 10 Z M3.6 4.6 L7.4 8.4 M5.8 10 H11" fill="none" stroke="#323130" stroke-width="1"/></svg>
<div class="a" style="left:1739px;top:364px;width:174px;height:39px;border:1px solid #d2d0ce;background:#f3f2f1"></div>
<div class="t" style="left:1747px;top:371px;font-size:10.8px;font-weight:700;color:#252423">Asset category ID</div>
<div class="t" style="left:1747px;top:386px;font-size:11px;color:#252423">is not (Blank)</div>
<svg style="left:1872px;top:372px" width="11" height="7" viewBox="0 0 11 7"><path d="M1 1 L5.5 5.5 L10 1" fill="none" stroke="#605e5c" stroke-width="1"/></svg><svg style="left:1892px;top:370px" width="12" height="11" viewBox="0 0 12 11"><path d="M4.2 10 L1.2 7 L7.2 1 L11 4.8 L5.8 10 Z M3.6 4.6 L7.4 8.4 M5.8 10 H11" fill="none" stroke="#323130" stroke-width="1"/></svg>
<div class="a" style="left:1739px;top:408px;width:174px;height:40px;border:1px solid #d2d0ce;background:#fff"></div>
<div class="t" style="left:1747px;top:416px;font-size:11px;color:#252423">Date</div>
<div class="t" style="left:1747px;top:431px;font-size:11px;color:#252423">is (All)</div>
<svg style="left:1872px;top:417px" width="11" height="7" viewBox="0 0 11 7"><path d="M1 1 L5.5 5.5 L10 1" fill="none" stroke="#605e5c" stroke-width="1"/></svg><svg style="left:1892px;top:415px" width="12" height="11" viewBox="0 0 12 11"><path d="M4.2 10 L1.2 7 L7.2 1 L11 4.8 L5.8 10 Z M3.6 4.6 L7.4 8.4 M5.8 10 H11" fill="none" stroke="#c8c6c4" stroke-width="1"/></svg>
<div class="a" style="left:1739px;top:453px;width:174px;height:39px;border:1px solid #d2d0ce;background:#f3f2f1"></div>
<div class="t" style="left:1747px;top:461px;font-size:10.8px;font-weight:700;color:#252423">Equipment type</div>
<div class="t" style="left:1747px;top:476px;font-size:11px;color:#252423">is not --</div>
<svg style="left:1872px;top:462px" width="11" height="7" viewBox="0 0 11 7"><path d="M1 1 L5.5 5.5 L10 1" fill="none" stroke="#605e5c" stroke-width="1"/></svg><svg style="left:1892px;top:460px" width="12" height="11" viewBox="0 0 12 11"><path d="M4.2 10 L1.2 7 L7.2 1 L11 4.8 L5.8 10 Z M3.6 4.6 L7.4 8.4 M5.8 10 H11" fill="none" stroke="#323130" stroke-width="1"/></svg>

</body></html>
